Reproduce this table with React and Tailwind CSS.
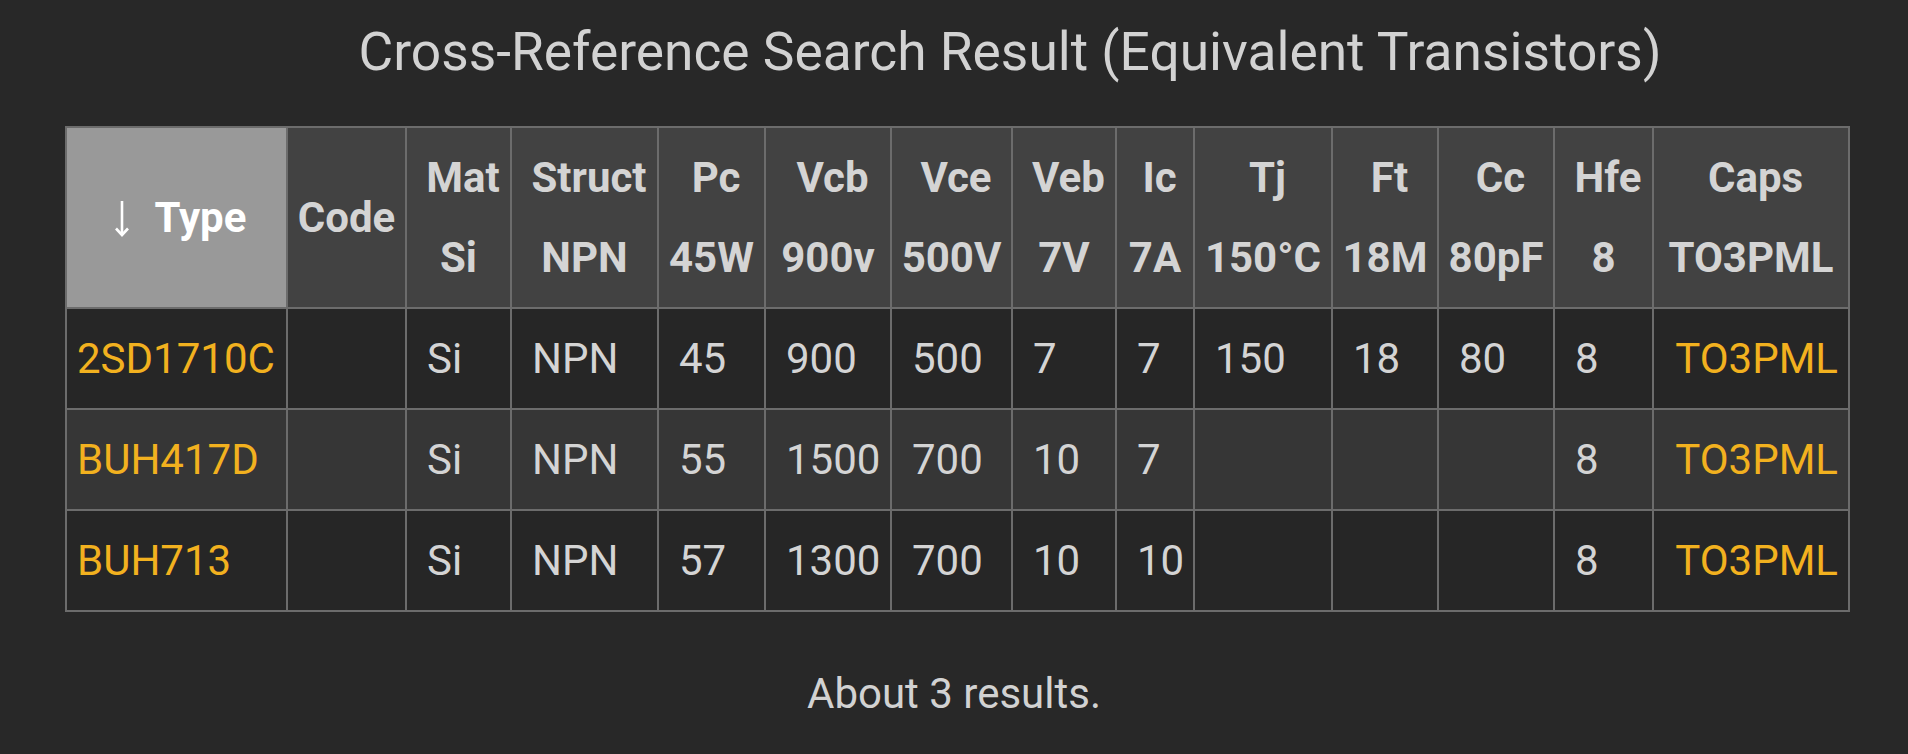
const COLS = [
  { key: 'type', w: 'w-[221px]' },
  { key: 'code', w: 'w-[119px]' },
  { key: 'mat', w: 'w-[105px]' },
  { key: 'struct', w: 'w-[147px]' },
  { key: 'pc', w: 'w-[107px]' },
  { key: 'vcb', w: 'w-[126px]' },
  { key: 'vce', w: 'w-[121px]' },
  { key: 'veb', w: 'w-[104px]' },
  { key: 'ic', w: 'w-[78px]' },
  { key: 'tj', w: 'w-[138px]' },
  { key: 'ft', w: 'w-[106px]' },
  { key: 'cc', w: 'w-[116px]' },
  { key: 'hfe', w: 'w-[99px]' },
  { key: 'caps', w: 'w-[196px]' },
]

const HEAD = [
  ['Mat', 'Si'],
  ['Struct', 'NPN'],
  ['Pc', '45W'],
  ['Vcb', '900v'],
  ['Vce', '500V'],
  ['Veb', '7V'],
  ['Ic', '7A'],
  ['Tj', '150°C'],
  ['Ft', '18M'],
  ['Cc', '80pF'],
  ['Hfe', '8'],
  ['Caps', 'TO3PML'],
]

const ROWS = [
  { type: '2SD1710C', cells: ['Si', 'NPN', '45', '900', '500', '7', '7', '150', '18', '80', '8'], caps: 'TO3PML' },
  { type: 'BUH417D', cells: ['Si', 'NPN', '55', '1500', '700', '10', '7', '', '', '', '8'], caps: 'TO3PML' },
  { type: 'BUH713', cells: ['Si', 'NPN', '57', '1300', '700', '10', '10', '', '', '', '8'], caps: 'TO3PML' },
]

function SortArrow() {
  return (
    <svg width="14" height="37" viewBox="0 0 14 37" fill="none" stroke="#ffffff" strokeWidth="2.6" className="mr-[26px] shrink-0">
      <path d="M7 1 V35" />
      <path d="M1 28.5 L7 35 L13 28.5" strokeLinejoin="miter" />
    </svg>
  )
}

export default function App() {
  return (
    <div className="min-h-[754px] bg-[#282828] font-['Roboto','Liberation_Sans',sans-serif] text-[#d4d4d4]">
      <h1 className="pl-[112px] pt-[20px] text-center text-[53.3px] font-normal leading-[64px] text-[#d2d2d2]">
        Cross-Reference Search Result (Equivalent Transistors)
      </h1>

      <table className="ml-[65px] mt-[42px] w-[1783px] table-fixed border-collapse border-2 border-[#6c6c6c] text-[42px] leading-[80px]">
        <colgroup>
          {COLS.map((c) => (
            <col key={c.key} className={c.w} />
          ))}
        </colgroup>
        <thead>
          <tr className="bg-[#424242] font-bold">
            <th className="border-2 border-[#6c6c6c] bg-[#999999] px-[10px] pb-[9px] pt-[10px] align-middle text-white">
              <div className="flex items-center justify-center pl-[8px]">
                <SortArrow />
                <span>Type</span>
              </div>
            </th>
            <th className="border-2 border-[#6c6c6c] px-[8px] pb-[9px] pt-[10px] text-center align-middle">Code</th>
            {HEAD.map(([top, bottom]) => (
              <th key={top} className="border-2 border-[#6c6c6c] px-[4px] pb-[9px] pt-[10px] text-center align-middle">
                <div className="whitespace-nowrap pl-[9px]">{top}</div>
                <div className="whitespace-nowrap">{bottom}</div>
              </th>
            ))}
          </tr>
        </thead>
        <tbody>
          {ROWS.map((row, i) => (
            <tr key={row.type} className={i % 2 === 1 ? 'bg-[#363636]' : 'bg-[#262626]'}>
              <td className="border-2 border-[#6c6c6c] pb-[9px] pl-[10px] pr-[8px] pt-[10px] text-left text-[#f2b11f]">{row.type}</td>
              <td className="border-2 border-[#6c6c6c] pb-[9px] pt-[10px]"></td>
              {row.cells.map((v, j) => (
                <td key={j} className="border-2 border-[#6c6c6c] pb-[9px] pl-[20px] pr-[6px] pt-[10px] text-left">
                  {v}
                </td>
              ))}
              <td className="border-2 border-[#6c6c6c] pb-[9px] pr-[10px] pt-[10px] text-right text-[#f2b11f]">{row.caps}</td>
            </tr>
          ))}
        </tbody>
      </table>

      <p className="mt-[58px] text-center text-[42px] leading-[48px] text-[#d2d2d2]">About 3 results.</p>
    </div>
  )
}
